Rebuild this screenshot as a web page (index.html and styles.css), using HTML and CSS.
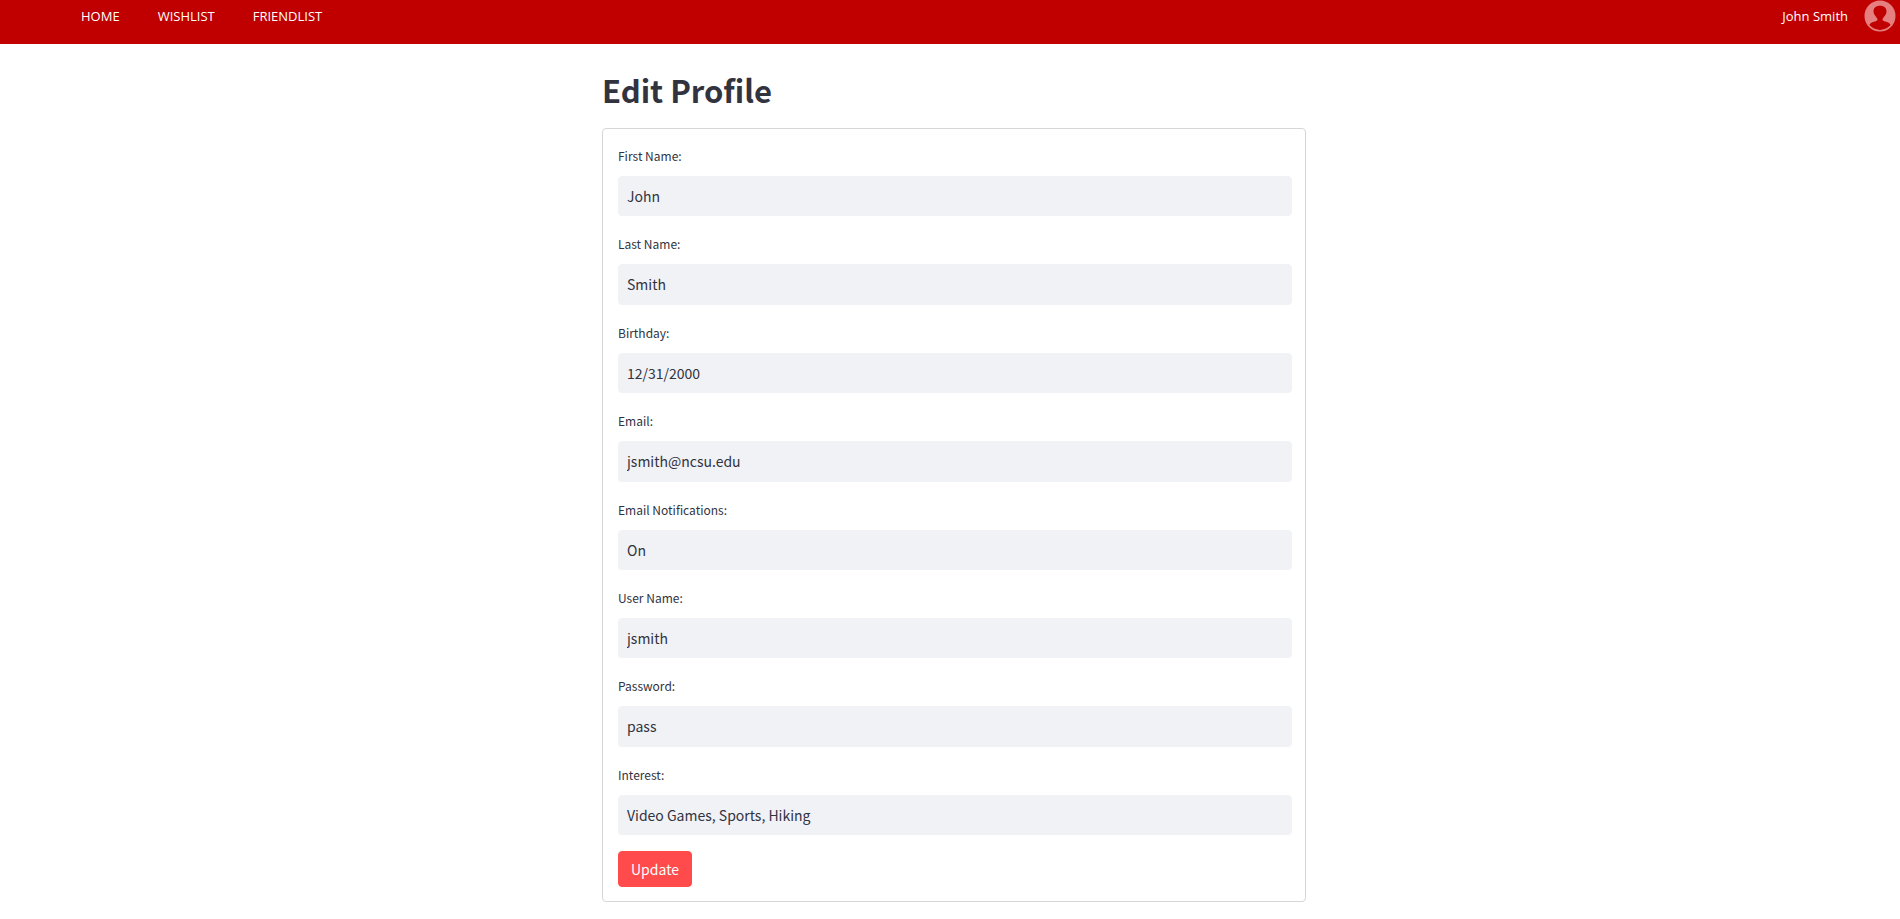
FILE: index.html
```
<!DOCTYPE html>
<html lang="en">
<head>
<meta charset="utf-8">
<meta name="viewport" content="width=device-width, initial-scale=1">
<title>Edit Profile</title>
<link rel="stylesheet" href="styles.css">
</head>
<body>
<header class="topbar">
  <nav class="nav" aria-label="Main">
    <a href="#">HOME</a>
    <a href="#">WISHLIST</a>
    <a href="#">FRIENDLIST</a>
  </nav>
  <a class="account" href="#">
    <span>John Smith</span>
    <svg class="avatar" viewBox="0 0 32 32" aria-hidden="true">
      <circle cx="16" cy="16" r="14.7" fill="none" stroke="#e68080" stroke-width="1.6"/>
      <path fill="#e68080" d="M16 1.5A14.5 14.5 0 0 0 5 25.500C6 22.600 9 21.700 12.400 20.900C14 20.400 13.700 18.800 12.300 17.200C10.700 15.300 9.500 13.500 9.500 11.200C9.500 7.900 12 5.700 16 5.700S22.500 7.900 22.500 11.200C22.500 13.500 21.300 15.300 19.700 17.200C18.300 18.800 18 20.400 19.600 20.900C23 21.700 26 22.600 27 25.500A14.500 14.500 0 0 0 16 1.500Z"/>
    </svg>
  </a>
</header>
<main class="page">
  <h1 class="title">Edit Profile</h1>
  <form class="card">
    <div class="field">
      <label for="first-name">First Name:</label>
      <input id="first-name" type="text" value="John">
    </div>
    <div class="field">
      <label for="last-name">Last Name:</label>
      <input id="last-name" type="text" value="Smith">
    </div>
    <div class="field">
      <label for="birthday">Birthday:</label>
      <input id="birthday" type="text" value="12/31/2000">
    </div>
    <div class="field">
      <label for="email">Email:</label>
      <input id="email" type="text" value="jsmith@ncsu.edu">
    </div>
    <div class="field">
      <label for="notifications">Email Notifications:</label>
      <input id="notifications" type="text" value="On">
    </div>
    <div class="field">
      <label for="user-name">User Name:</label>
      <input id="user-name" type="text" value="jsmith">
    </div>
    <div class="field">
      <label for="password">Password:</label>
      <input id="password" type="text" value="pass">
    </div>
    <div class="field">
      <label for="interest">Interest:</label>
      <input id="interest" type="text" value="Video Games, Sports, Hiking">
    </div>
    <button class="submit" type="submit">Update</button>
  </form>
</main>
</body>
</html>
```

FILE: styles.css
```
*, *::before, *::after {
  box-sizing: border-box;
}

body {
  margin: 0;
  background: #fff;
  color: #31333f;
  font-family: "Noto Sans CJK SC", sans-serif;
  font-size: 14px;
}

.topbar {
  display: flex;
  justify-content: space-between;
  align-items: flex-start;
  padding: 0 4px 12px 81px;
  background: #c00000;
  font-family: "Open Sans", sans-serif;
  font-size: 13px;
  font-weight: 500;
  line-height: 32px;
}

.topbar a {
  color: #fff;
  text-decoration: none;
}

.nav {
  display: flex;
  gap: 38px;
}

.account {
  display: flex;
  gap: 16px;
}

.avatar {
  width: 32px;
  height: 32px;
}

.page {
  max-width: 712px;
  margin: 0 auto;
  padding: 22px 0 14px 8px;
}

.title {
  margin: 0 0 14px;
  font-size: 31px;
  font-weight: 700;
  line-height: 48px;
}

.card {
  display: flex;
  flex-direction: column;
  align-items: stretch;
  gap: 16px;
  padding: 15px 13px 14px 15px;
  border: 1px solid #d6d6d9;
  border-radius: 4px;
}

.field {
  display: flex;
  flex-direction: column;
  gap: 8px;
}

.field label {
  font-size: 12px;
  line-height: 24px;
}

.field input {
  width: 100%;
  padding: 8px;
  border: 1px solid #f0f2f6;
  border-radius: 4px;
  background: #f0f2f6;
  color: inherit;
  font-family: inherit;
  font-size: 14px;
  line-height: 1.6;
}

.submit {
  align-self: flex-start;
  padding: 6px 12px;
  border: 1px solid #ff4b4b;
  border-radius: 4px;
  background: #ff4b4b;
  color: #fff;
  font-family: inherit;
  font-size: 14px;
  font-weight: 400;
  line-height: 22px;
}
```
